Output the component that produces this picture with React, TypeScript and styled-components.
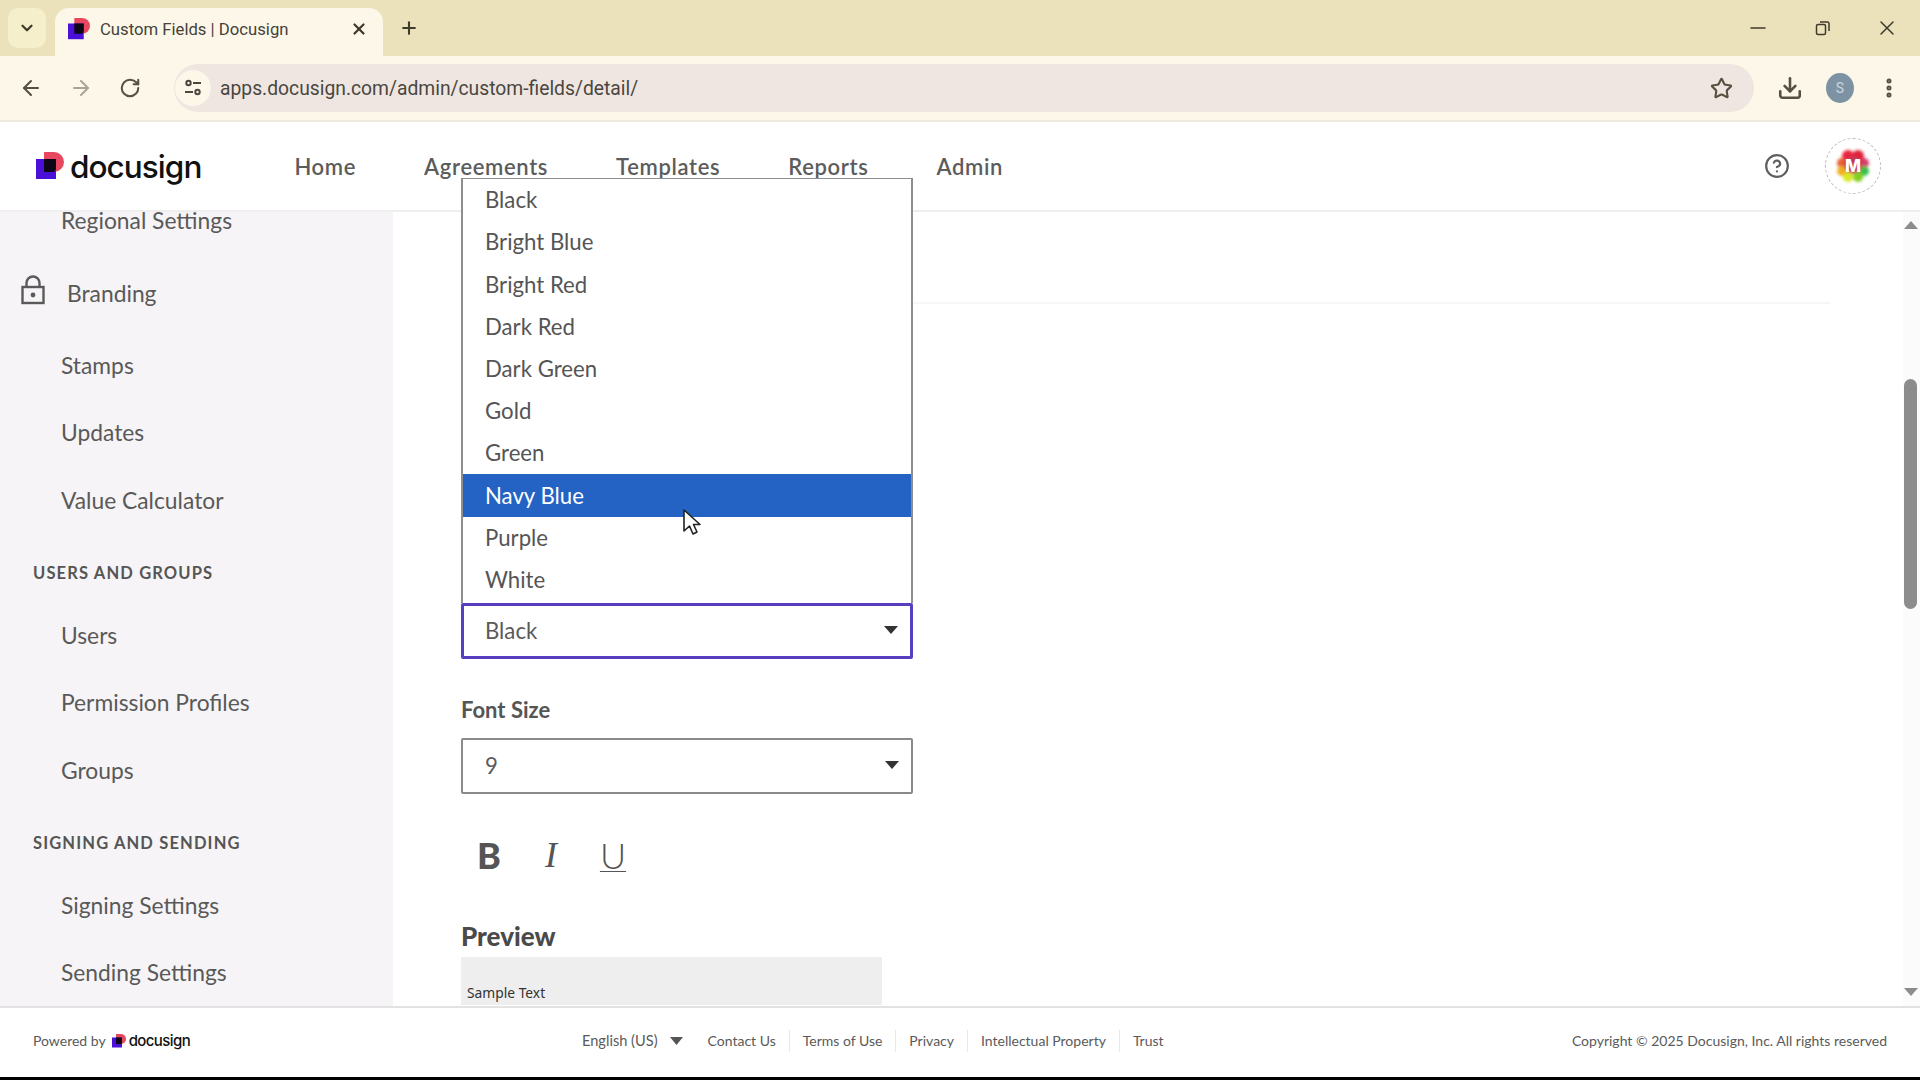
import React from 'react';
import styled, { createGlobalStyle } from 'styled-components';
import { ArrowLeft, ArrowRight, ChevronDown, CircleHelp, Download, EllipsisVertical, Minus, Plus, RotateCw, Star, X } from 'lucide-react';

const GlobalStyle = createGlobalStyle`
    html, body {
        margin: 0;
        padding: 0;
        background: #000;
    }
    * {
        box-sizing: border-box;
    }
`;

const Page = styled.div`
    width: 1920px;
    height: 1080px;
    display: flex;
    flex-direction: column;
    background: #000;
    overflow: hidden;
    font-family: Lato, "Liberation Sans", sans-serif;
    color: #555;
`;

/* browser chrome */
const TabStrip = styled.div`
    height: 56px;
    background: #ebe2bb;
    display: flex;
    align-items: flex-end;
    padding-left: 8px;
    color: #3f3b2c;
`;

const TabListButton = styled.div`
    width: 38px;
    height: 40px;
    margin-bottom: 8px;
    border-radius: 10px;
    background: #f6efcb;
    display: flex;
    align-items: center;
    justify-content: center;
`;

const Tab = styled.div`
    width: 328px;
    height: 48px;
    margin-left: 9px;
    padding: 0 15px 6px 13px;
    background: #fdf7e9;
    border-radius: 14px 14px 0 0;
    display: flex;
    align-items: center;
`;

const TabTitle = styled.span`
    margin-left: 10px;
    flex: 1;
    font-family: Roboto, sans-serif;
    font-size: 16.7px;
    color: #45423a;
`;

const NewTab = styled.div`
    margin: 0 0 8px 16px;
    height: 40px;
    display: flex;
    align-items: center;
`;

const WindowButtons = styled.div`
    margin-left: auto;
    height: 56px;
    display: flex;
    align-items: center;
    gap: 44.5px;
    padding-right: 21px;
`;

const Toolbar = styled.div`
    height: 66px;
    background: #fdf7e9;
    border-bottom: 2px solid #eeeae0;
    display: flex;
    align-items: center;
    padding: 0 19px 0 19px;
    color: #55503f;
`;

const NavIcons = styled.div`
    display: flex;
    align-items: center;
    gap: 26px;
    width: 155px;
`;

const Omnibox = styled.div`
    width: 1580px;
    height: 48px;
    border-radius: 24px;
    background: #efe6e2;
    display: flex;
    align-items: center;
    padding: 0 21px 0 0;
`;

const SiteInfo = styled.div`
    width: 36px;
    height: 36px;
    margin-left: 1px;
    border-radius: 50%;
    background: #fdf7e9;
    display: flex;
    align-items: center;
    justify-content: center;
`;

const Url = styled.span`
    margin-left: 9px;
    flex: 1;
    font-family: Roboto, sans-serif;
    font-size: 19.3px;
    color: #4a4640;
`;

const ToolbarEnd = styled.div`
    margin-left: auto;
    display: flex;
    align-items: center;
    gap: 23px;
`;

const ProfileDot = styled.div`
    width: 28px;
    height: 30px;
    border-radius: 50%;
    background: #7d93a3;
    color: #c9d6de;
    font-family: Roboto, sans-serif;
    font-size: 14px;
    display: flex;
    align-items: center;
    justify-content: center;
`;

/* docusign header */
const SiteHeader = styled.header`
    height: 90px;
    background: #fff;
    border-bottom: 2px solid #eeeeee;
    display: flex;
    align-items: center;
    padding: 0 39px 0 36px;
`;

const LogoLink = styled.div<{ $small?: boolean }>`
    display: flex;
    align-items: center;
    gap: ${({ $small }) => ($small ? '3px' : '6px')};
`;

const LogoWord = styled.span<{ $small?: boolean }>`
    font-family: Inter, sans-serif;
    font-weight: 500;
    font-size: ${({ $small }) => ($small ? '15px' : '31.5px')};
    letter-spacing: ${({ $small }) => ($small ? '-0.6px' : '-0.95px')};
    color: #111;
`;

const MainNav = styled.nav`
    display: flex;
    align-items: center;
    gap: 68px;
    margin-left: 93px;
    font-size: 22px;
    font-weight: 600;
    letter-spacing: 0.65px;
    color: #5c5c5c;
`;

const HeaderEnd = styled.div`
    margin-left: auto;
    display: flex;
    align-items: center;
    gap: 35px;
    color: #5f5f5f;
`;

const Avatar = styled.div`
    width: 56px;
    height: 56px;
    border-radius: 50%;
    border: 1px dashed #bbb;
    display: flex;
    align-items: center;
    justify-content: center;
`;

/* page body */
const Body = styled.div`
    height: 794px;
    background: #fff;
    display: flex;
`;

const Sidebar = styled.aside`
    width: 393px;
    background: #f6f4f6;
    overflow: hidden;
`;

const SideList = styled.div`
    margin-top: -26px;
    display: flex;
    flex-direction: column;
`;

const SideItem = styled.div<{ $locked?: boolean }>`
    height: 67.5px;
    flex: none;
    display: flex;
    align-items: center;
    margin: ${({ $locked }) => ($locked ? '5.5px 0 4.5px' : '0')};
    padding-left: ${({ $locked }) => ($locked ? '21px' : '61px')};
    font-size: 22.8px;
    color: #595959;
`;

const LockIcon = styled.svg`
    margin-right: 22px;
    margin-top: -6px;
`;

const SideHeading = styled.div`
    height: 67.5px;
    flex: none;
    padding: 11px 0 0 33px;
    display: flex;
    align-items: center;
    font-size: 16.5px;
    font-weight: 700;
    letter-spacing: 1.15px;
    color: #555;
`;

const Main = styled.main`
    flex: 1;
    padding-left: 68px;
`;

const Divider = styled.div`
    height: 2px;
    margin: 90px 73px 0 0;
    background: #f6f6f6;
`;

const ColorField = styled.div`
    position: relative;
    width: 452px;
    margin-top: 299px;
`;

const OptionList = styled.div`
    position: absolute;
    left: 0;
    bottom: 100%;
    width: 452px;
    padding-bottom: 2px;
    background: #fff;
    border: solid #8e8e8e;
    border-width: 1px 2px 0;
    z-index: 10;
`;

const Option = styled.div<{ $active?: boolean }>`
    height: 42.2px;
    display: flex;
    align-items: center;
    padding: 0 0 1px 22px;
    font-size: 22.2px;
    background: ${({ $active }) => ($active ? '#2463c4' : '#fff')};
    color: ${({ $active }) => ($active ? '#fff' : '#555')};
`;

const Cursor = styled.svg`
    position: absolute;
    left: 219px;
    top: 330px;
`;

const Select = styled.div<{ $focused?: boolean }>`
    width: 452px;
    height: 56px;
    border: ${({ $focused }) => ($focused ? '3px solid #5a3ec0' : '2px solid #8a8a8a')};
    border-radius: 2px;
    display: flex;
    align-items: center;
    justify-content: space-between;
    padding: 0 12px 2px ${({ $focused }) => ($focused ? '21px' : '22px')};
    font-size: 22.2px;
    color: #5a5a5a;
    background: #fff;
`;

const Caret = styled.svg`
    display: block;
`;

const FieldLabel = styled.div`
    margin: 38px 0 16px;
    font-size: 22px;
    font-weight: 700;
    line-height: 25px;
    color: #555;
`;

const FormatRow = styled.div`
    display: flex;
    gap: 6px;
    margin-top: 39px;
`;

const FormatButton = styled.div<{ $kind: 'bold' | 'italic' | 'underline' }>`
    width: 56px;
    height: 44px;
    display: flex;
    align-items: center;
    justify-content: center;
    color: #555;
    font-size: 36px;
    line-height: 1;
    font-family: ${({ $kind }) => ($kind === 'italic' ? '"Liberation Serif", serif' : 'Lato, sans-serif')};
    font-weight: ${({ $kind }) => ($kind === 'bold' ? 900 : 300)};
    font-style: ${({ $kind }) => ($kind === 'italic' ? 'italic' : 'normal')};
    text-decoration: ${({ $kind }) => ($kind === 'underline' ? 'underline' : 'none')};
    text-decoration-thickness: 1px;
    text-underline-offset: 2px;
`;

const PreviewTitle = styled.h2`
    margin: 43px 0 0;
    font-size: 26px;
    font-weight: 900;
    line-height: 32px;
    color: #4a4a4a;
`;

const PreviewBox = styled.div`
    width: 421px;
    height: 48px;
    margin-top: 5px;
    padding: 27px 0 0 6px;
    background: #eeeeee;
    font-family: "Noto Sans", sans-serif;
    font-size: 13.8px;
    line-height: 18px;
    color: #333;
`;

const ScrollTrack = styled.div`
    width: 17px;
    background: #fbfbfb;
    display: flex;
    flex-direction: column;
    align-items: center;
    padding: 9px 2px 10px 0;
`;

const ScrollThumb = styled.div`
    width: 13px;
    height: 230px;
    margin-top: 150px;
    border-radius: 7px;
    background: #8c8c8c;
`;

const ScrollDown = styled(Caret)`
    margin-top: auto;
`;

/* footer */
const Footer = styled.footer`
    height: 71px;
    background: #fff;
    border-top: 2px solid #e2e2e2;
    display: flex;
    align-items: center;
    padding: 0 33px 4px;
    font-size: 14px;
    color: #5a5a5a;
`;

const Powered = styled.div`
    width: 549px;
    display: flex;
    align-items: center;
    gap: 6px;
    font-size: 14px;
`;

const Lang = styled.div`
    display: flex;
    align-items: center;
    gap: 12px;
    margin-right: 25px;
    font-size: 14.6px;
`;

const FooterLinks = styled.div`
    display: flex;
    align-items: center;
`;

const FooterLink = styled.span`
    padding: 0 13px;
    border-left: 1px solid #e8e8e8;
    line-height: 22px;

    &:first-child {
        padding-left: 0;
        border-left: none;
    }
`;

const Copyright = styled.span`
    margin-left: auto;
`;

const sideTop = ['Stamps', 'Updates', 'Value Calculator'];
const sideUsers = ['Users', 'Permission Profiles', 'Groups'];
const sideSigning = ['Signing Settings', 'Sending Settings'];
const colors = ['Black', 'Bright Blue', 'Bright Red', 'Dark Red', 'Dark Green', 'Gold', 'Green', 'Navy Blue', 'Purple', 'White'];
const links = ['Contact Us', 'Terms of Use', 'Privacy', 'Intellectual Property', 'Trust'];

const LogoMark = ({ size }: { size: number }) => (
    <svg width={size} height={size} viewBox="0 0 28 28">
        <path d="M8 0h10a10 10 0 0 1 0 20H8z" fill="#e8485f" />
        <rect x="0" y="7" width="20" height="20" fill="#4a10d8" />
        <path d="M8 7h12v9.5A10 10 0 0 1 18 20H8z" fill="#0c0616" />
    </svg>
);

const SiteInfoIcon = () => (
    <svg width="20" height="20" viewBox="0 0 20 20" fill="none" stroke="#4a4640" strokeWidth="2">
        <circle cx="5.5" cy="5" r="2.2" />
        <path d="M10 5h8M2 14h8" />
        <circle cx="14.5" cy="14" r="2.2" />
    </svg>
);

const RestoreIcon = () => (
    <svg width="16" height="16" viewBox="0 0 16 16" fill="none" stroke="#3f3b2c" strokeWidth="1.5">
        <rect x="1.5" y="4.5" width="9" height="10" rx="1.5" />
        <path d="M5 2h7.5A1.5 1.5 0 0 1 14 3.500V11" />
    </svg>
);

const AvatarMark = () => (
    <svg width="44" height="44" viewBox="0 0 44 44">
        <defs>
            <filter id="smear" x="-20%" y="-20%" width="140%" height="140%">
                <feGaussianBlur stdDeviation="1.600" />
            </filter>
        </defs>
        <g filter="url(#smear)">
            <circle cx="17" cy="12" r="6" fill="#e8203a" />
            <circle cx="27" cy="12" r="6" fill="#e0203a" />
            <circle cx="33" cy="19" r="5" fill="#d83a6a" />
            <circle cx="11" cy="19" r="5" fill="#e86030" />
            <circle cx="11" cy="27" r="5" fill="#f0b020" />
            <circle cx="33" cy="27" r="5" fill="#38c050" />
            <circle cx="22" cy="21" r="9" fill="#c83858" />
            <circle cx="17" cy="33" r="5" fill="#d8e820" />
            <circle cx="27" cy="33" r="5" fill="#80d020" />
        </g>
        <text x="22" y="28" textAnchor="middle" fontFamily="Inter, sans-serif" fontWeight="800" fontSize="17" fill="#fff">M</text>
    </svg>
);

const App: React.FC = () => {
    return (
        <Page>
            <GlobalStyle />
            <TabStrip>
                <TabListButton>
                    <ChevronDown size={18} strokeWidth={3} />
                </TabListButton>
                <Tab>
                    <LogoMark size={22} />
                    <TabTitle>Custom Fields | Docusign</TabTitle>
                    <X size={18} strokeWidth={3} />
                </Tab>
                <NewTab>
                    <Plus size={20} strokeWidth={2.5} />
                </NewTab>
                <WindowButtons>
                    <Minus size={24} strokeWidth={1.5} />
                    <RestoreIcon />
                    <X size={24} strokeWidth={1.5} />
                </WindowButtons>
            </TabStrip>
            <Toolbar>
                <NavIcons>
                    <ArrowLeft size={24} strokeWidth={2} />
                    <ArrowRight size={24} strokeWidth={2} color="#a8a498" />
                    <RotateCw size={22} strokeWidth={2.2} />
                </NavIcons>
                <Omnibox>
                    <SiteInfo>
                        <SiteInfoIcon />
                    </SiteInfo>
                    <Url>apps.docusign.com/admin/custom-fields/detail/</Url>
                    <Star size={23} strokeWidth={2.2} />
                </Omnibox>
                <ToolbarEnd>
                    <Download size={26} strokeWidth={2.4} />
                    <ProfileDot>S</ProfileDot>
                    <EllipsisVertical size={24} strokeWidth={3} />
                </ToolbarEnd>
            </Toolbar>
            <SiteHeader>
                <LogoLink>
                    <LogoMark size={28} />
                    <LogoWord>docusign</LogoWord>
                </LogoLink>
                <MainNav>
                    <span>Home</span>
                    <span>Agreements</span>
                    <span>Templates</span>
                    <span>Reports</span>
                    <span>Admin</span>
                </MainNav>
                <HeaderEnd>
                    <CircleHelp size={26} strokeWidth={2} />
                    <Avatar>
                        <AvatarMark />
                    </Avatar>
                </HeaderEnd>
            </SiteHeader>
            <Body>
                <Sidebar>
                    <SideList>
                        <SideItem>Regional Settings</SideItem>
                        <SideItem $locked>
                            <LockIcon width="24" height="30" viewBox="0 0 24 30" fill="none" stroke="#5a5a5a" strokeWidth="2.4">
                                <rect x="1.500" y="12" width="21" height="16" />
                                <path d="M5.500 12V8a6.500 6.500 0 0 1 13 0v4" />
                                <circle cx="12" cy="20" r="1.200" fill="#5a5a5a" />
                            </LockIcon>
                            Branding
                        </SideItem>
                        {sideTop.map((name) => (
                            <SideItem key={name}>{name}</SideItem>
                        ))}
                        <SideHeading>USERS AND GROUPS</SideHeading>
                        {sideUsers.map((name) => (
                            <SideItem key={name}>{name}</SideItem>
                        ))}
                        <SideHeading>SIGNING AND SENDING</SideHeading>
                        {sideSigning.map((name) => (
                            <SideItem key={name}>{name}</SideItem>
                        ))}
                    </SideList>
                </Sidebar>
                <Main>
                    <Divider />
                    <ColorField>
                        <OptionList>
                            {colors.map((name) => (
                                <Option key={name} $active={name === 'Navy Blue'}>{name}</Option>
                            ))}
                            <Cursor width="20" height="28" viewBox="0 0 20 28">
                                <path d="M2 1v21l5.500-5 3.500 8 4-2-3.500-7.500H18z" fill="#fff" stroke="#222" strokeWidth="1.600" strokeLinejoin="round" />
                            </Cursor>
                        </OptionList>
                        <Select $focused>
                            Black
                            <Caret width="14" height="8" viewBox="0 0 14 8">
                                <path d="M0 0h14L7 8z" fill="#333" />
                            </Caret>
                        </Select>
                    </ColorField>
                    <FieldLabel>Font Size</FieldLabel>
                    <Select>
                        9
                        <Caret width="14" height="8" viewBox="0 0 14 8">
                            <path d="M0 0h14L7 8z" fill="#333" />
                        </Caret>
                    </Select>
                    <FormatRow>
                        <FormatButton $kind="bold">B</FormatButton>
                        <FormatButton $kind="italic">I</FormatButton>
                        <FormatButton $kind="underline">U</FormatButton>
                    </FormatRow>
                    <PreviewTitle>Preview</PreviewTitle>
                    <PreviewBox>Sample Text</PreviewBox>
                </Main>
                <ScrollTrack>
                    <Caret width="14" height="8" viewBox="0 0 14 8">
                        <path d="M7 0l7 8H0z" fill="#8c8c8c" />
                    </Caret>
                    <ScrollThumb />
                    <ScrollDown width="14" height="8" viewBox="0 0 14 8">
                        <path d="M0 0h14L7 8z" fill="#8c8c8c" />
                    </ScrollDown>
                </ScrollTrack>
            </Body>
            <Footer>
                <Powered>
                    Powered by
                    <LogoLink $small>
                        <LogoMark size={14} />
                        <LogoWord $small>docusign</LogoWord>
                    </LogoLink>
                </Powered>
                <Lang>
                    English (US)
                    <Caret width="13" height="8" viewBox="0 0 13 8">
                        <path d="M0 0h13L6.500 8z" fill="#555" />
                    </Caret>
                </Lang>
                <FooterLinks>
                    {links.map((name) => (
                        <FooterLink key={name}>{name}</FooterLink>
                    ))}
                </FooterLinks>
                <Copyright>Copyright © 2025 Docusign, Inc. All rights reserved</Copyright>
            </Footer>
        </Page>
    );
};

export default App;
